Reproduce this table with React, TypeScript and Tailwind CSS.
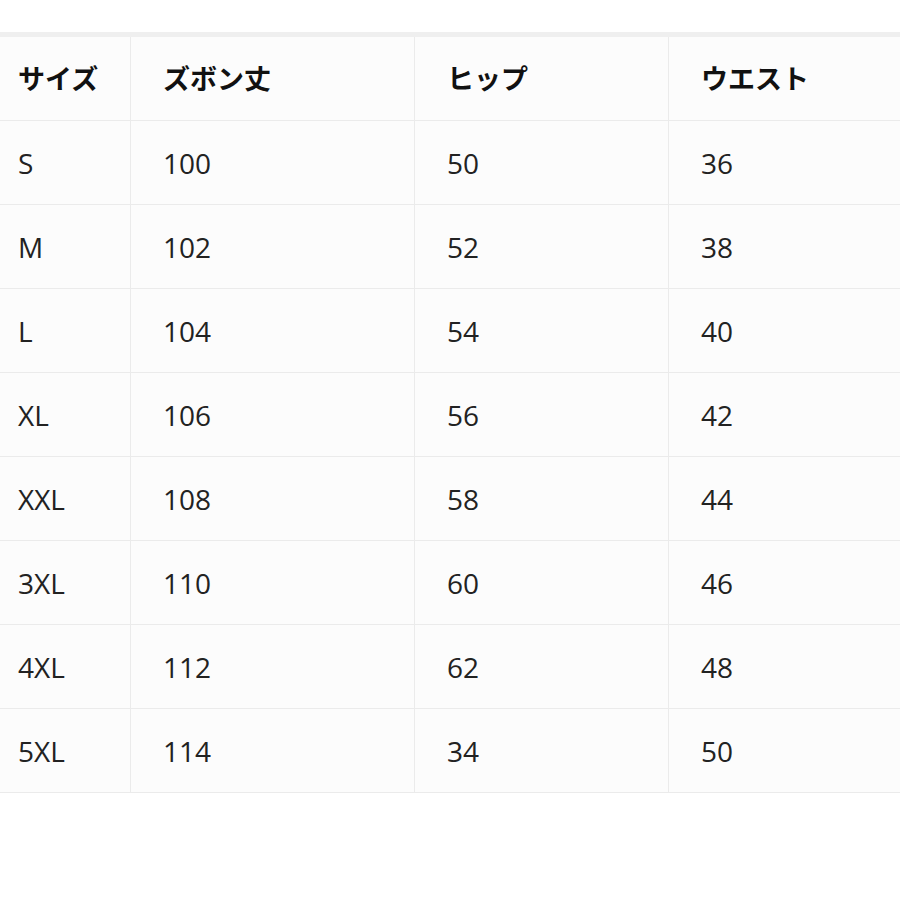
const rows = [
  ['S', '100', '50', '36'],
  ['M', '102', '52', '38'],
  ['L', '104', '54', '40'],
  ['XL', '106', '56', '42'],
  ['XXL', '108', '58', '44'],
  ['3XL', '110', '60', '46'],
  ['4XL', '112', '62', '48'],
  ['5XL', '114', '34', '50'],
];

const headers = ['サイズ', 'ズボン丈', 'ヒップ', 'ウエスト'];
const widths = ['w-[145px]', 'w-[284px]', 'w-[254px]', 'w-[300px]'];

export default function App() {
  return (
    <div className="w-[900px] h-[900px] bg-white overflow-hidden pt-[32px]">
      <table
        className="table-fixed border-collapse ml-[-15px] w-[983px] bg-[#fcfcfc] border-t-[5px] border-t-[#efefef]"
        style={{ fontFamily: '"Open Sans", "Noto Sans CJK JP", sans-serif' }}
      >
        <colgroup>
          {widths.map((w) => (
            <col key={w} className={w} />
          ))}
        </colgroup>
        <thead>
          <tr className="h-[86px]">
            {headers.map((h) => (
              <th
                key={h}
                className="border border-[#ebebeb] border-t-0 pl-[32px] text-left font-bold text-[27px] text-[#111] align-middle"
                style={{ fontFamily: '"Noto Sans CJK JP", sans-serif' }}
              >
                {h}
              </th>
            ))}
          </tr>
        </thead>
        <tbody>
          {rows.map((r) => (
            <tr key={r[0]} className="h-[84px]">
              {r.map((c, i) => (
                <td
                  key={i}
                  className="border border-[#ebebeb] pl-[32px] text-left text-[28px] text-[#222] align-middle"
                >
                  {c}
                </td>
              ))}
            </tr>
          ))}
        </tbody>
      </table>
    </div>
  );
}
